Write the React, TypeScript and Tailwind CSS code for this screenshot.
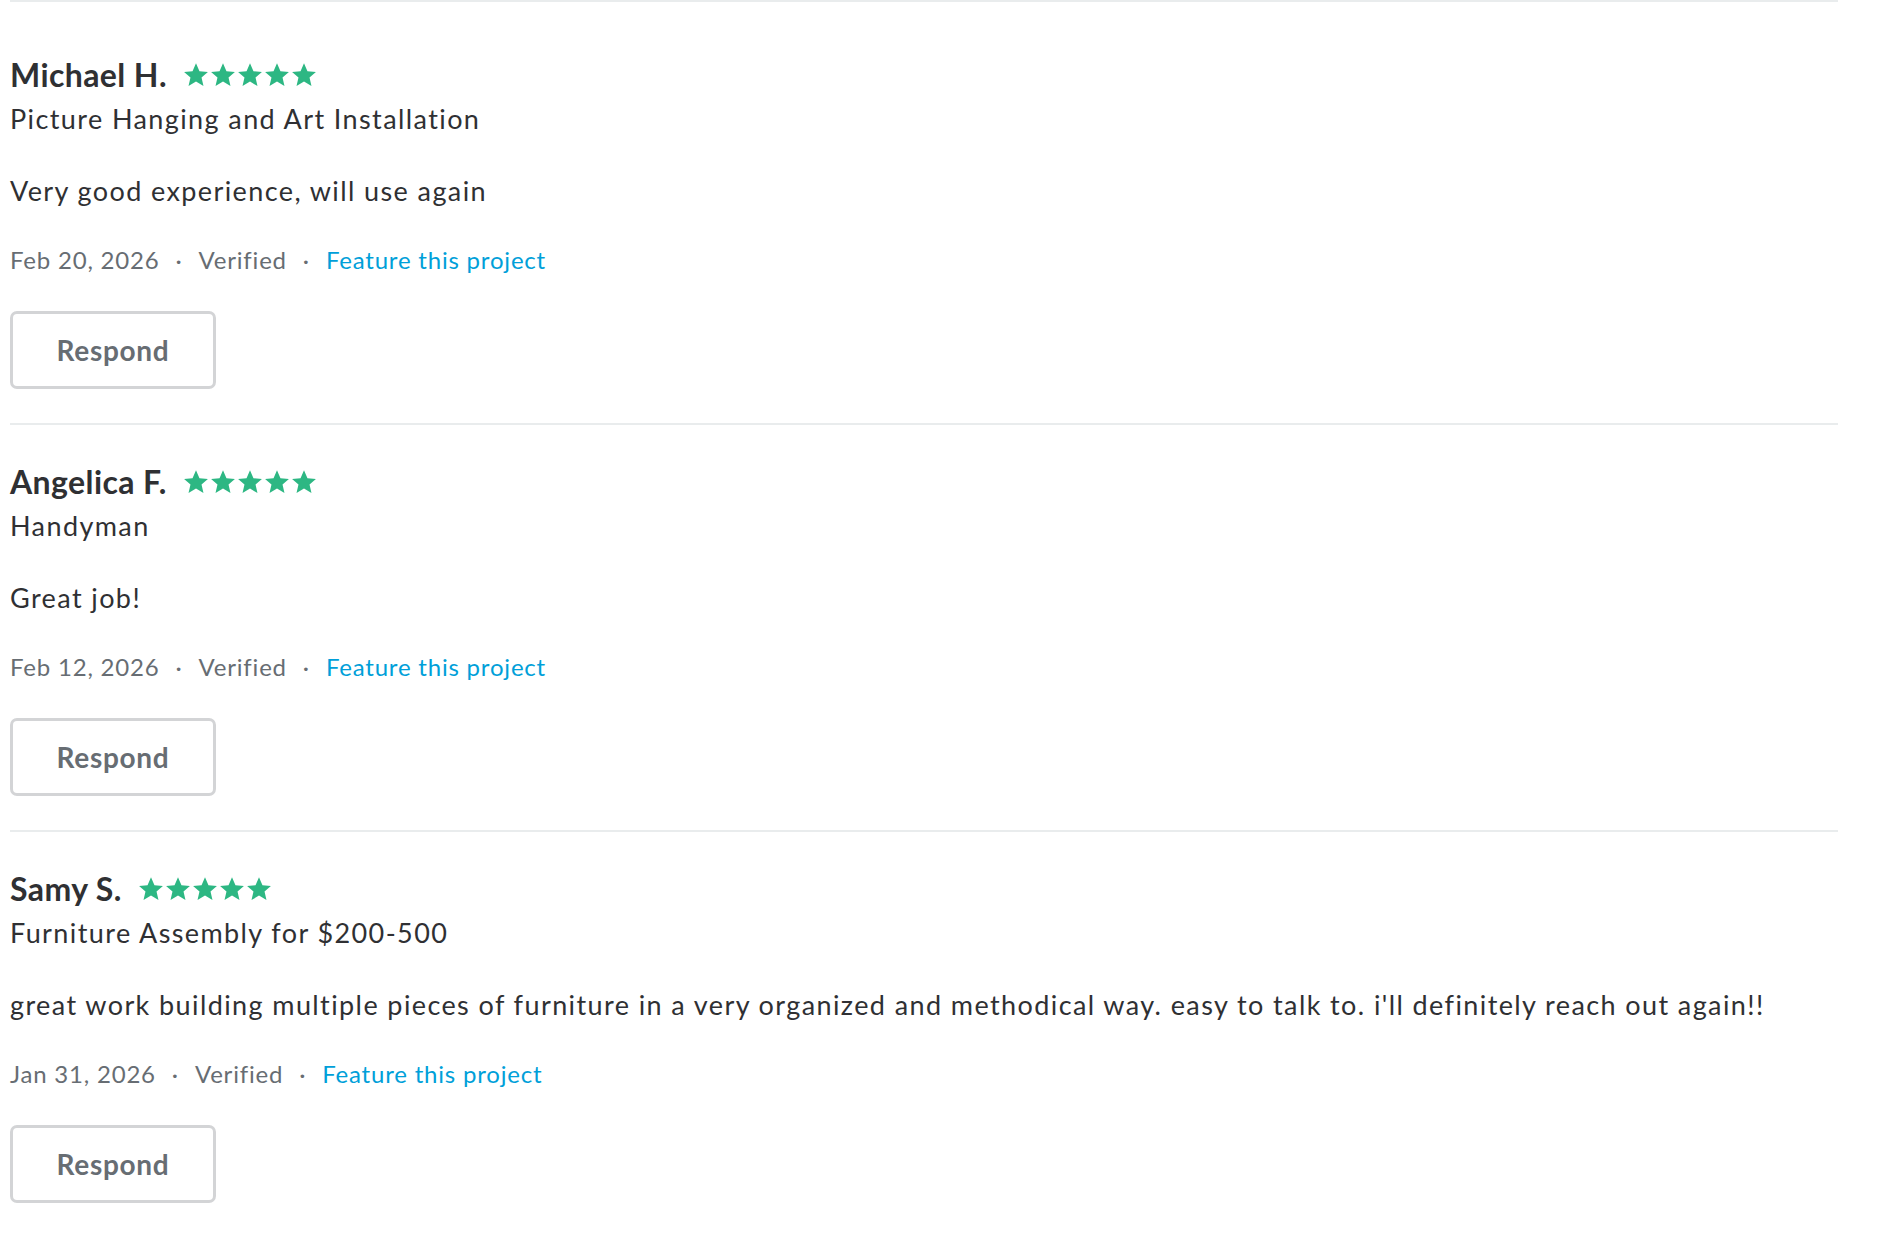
import React from 'react';

interface Review {
  name: string;
  service: string;
  body: string;
  date: string;
}

const reviews: Review[] = [
  {
    name: 'Michael H.',
    service: 'Picture Hanging and Art Installation',
    body: 'Very good experience, will use again',
    date: 'Feb 20, 2026',
  },
  {
    name: 'Angelica F.',
    service: 'Handyman',
    body: 'Great job!',
    date: 'Feb 12, 2026',
  },
  {
    name: 'Samy S.',
    service: 'Furniture Assembly for $200-500',
    body: "great work building multiple pieces of furniture in a very organized and methodical way. easy to talk to. i'll definitely reach out again!!",
    date: 'Jan 31, 2026',
  },
];

const Star: React.FC = () => (
  <svg width="26" height="26" viewBox="0 0 24 24" fill="#2db783">
    <path d="M12 1.2l3.2 7.3 7.8.7-5.9 5.2 1.8 7.8L12 18.1l-6.9 4.1 1.8-7.8L1 9.2l7.8-.7z" />
  </svg>
);

const Stars: React.FC = () => (
  <div className="flex items-center gap-[1px] ml-[16px]">
    {[0, 1, 2, 3, 4].map((i) => (
      <Star key={i} />
    ))}
  </div>
);

const ReviewItem: React.FC<{ review: Review; first: boolean }> = ({ review, first }) => (
  <div className={`${first ? 'pt-[53px]' : 'pt-[37px]'} pb-[34px] border-b-2 border-[#e9eced]`}>
    <div className="flex items-center">
      <h3 className="text-[32px] leading-[40px] font-bold tracking-[0.4px] text-[#2f3033]">{review.name}</h3>
      <Stars />
    </div>
    <p className="mt-[6px] text-[27px] leading-[36px] tracking-[1.4px] text-[#2f3033]">{review.service}</p>
    <p className="mt-[36px] text-[27px] leading-[36px] tracking-[1.4px] text-[#2f3033]">{review.body}</p>
    <div className="mt-[35px] flex items-center text-[24px] leading-[32px] tracking-[0.8px] text-[#676d73]">
      <span>{review.date}</span>
      <span className="mx-[16px]">·</span>
      <span>Verified</span>
      <span className="mx-[16px]">·</span>
      <a href="#" className="text-[#009fd9]">Feature this project</a>
    </div>
    <button className="mt-[35px] w-[206px] h-[78px] flex items-center justify-center border-[3px] border-[#d3d4d6] rounded-[7px] bg-white text-[28px] font-bold tracking-[0.7px] text-[#676d73]">
      Respond
    </button>
  </div>
);

export default function App() {
  return (
    <div className="min-h-screen bg-white" style={{ fontFamily: 'Lato, "Open Sans", sans-serif' }}>
      <div className="ml-[10px] w-[1828px] border-t-2 border-[#e9eced]">
        {reviews.map((r, i) => (
          <ReviewItem key={r.name} review={r} first={i === 0} />
        ))}
      </div>
    </div>
  );
}
